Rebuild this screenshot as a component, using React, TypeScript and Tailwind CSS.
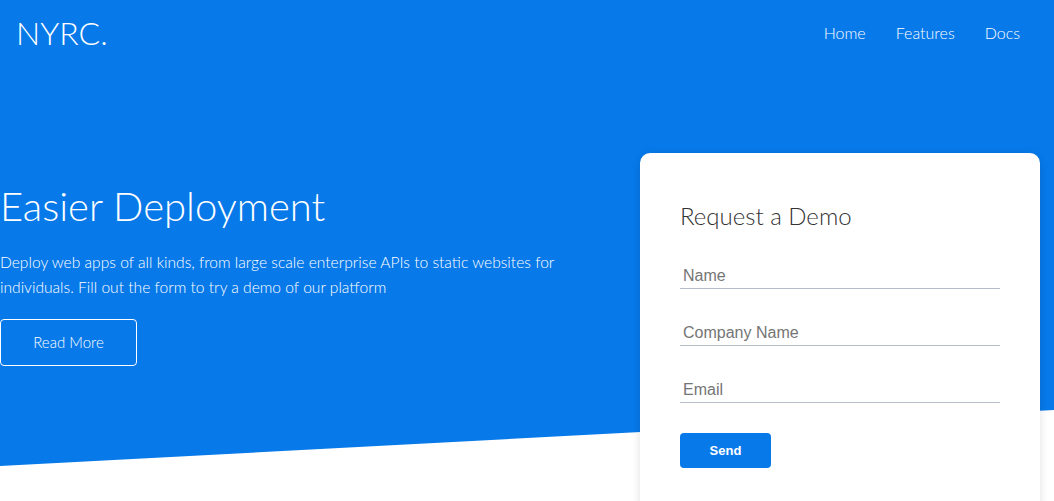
import React from 'react';

const Header = () => {
  const links = ['Home', 'Features', 'Docs'];

  return (
    <header className="flex items-center justify-between pl-4 pr-[34px] pt-[11px]">
      <a className="text-[32px] font-light leading-[44px] text-white" href="#">NYRC.</a>
      <nav className="flex items-center gap-[30px] text-[16px] font-light text-white">
        {links.map((link) => (
          <a key={link} href="#">{link}</a>
        ))}
      </nav>
    </header>
  );
};

const DemoForm = () => {
  const fields = ['Name', 'Company Name', 'Email'];

  return (
    <div className="mt-[6px] h-[360px] w-[400px] shrink-0 rounded-[10px] bg-white px-10 pt-[46px] shadow-[0_2px_10px_rgba(0,0,0,0.12)]">
      <h2 className="text-[24px] font-light leading-[34px] text-[#333]">Request a Demo</h2>
      <form className="mt-[23px] flex w-[320px] flex-col gap-[24px]">
        {fields.map((field) => (
          <input
            key={field}
            placeholder={field}
            className="h-[33px] border-b border-[#b5bdc9] px-[3px] pt-[7px] pb-0 font-['Liberation_Sans',Arial,sans-serif] text-[16px] text-[#333] outline-none placeholder:text-[#757575]"
          />
        ))}
        <button
          type="button"
          className="mt-[6px] h-[35px] w-[91px] rounded-[4px] bg-[#0779e9] font-['Liberation_Sans',Arial,sans-serif] text-[13px] font-bold text-white"
        >
          Send
        </button>
      </form>
    </div>
  );
};

const App = () => {
  return (
    <div className="relative h-[501px] w-full overflow-hidden bg-white font-['Lato','Noto_Sans',sans-serif]">
      {/* slanted blue background */}
      <div className="absolute inset-x-0 top-0 h-[466px] bg-[#0779e9] [clip-path:polygon(0_0,100%_0,100%_88%,0_100%)]"></div>

      <div className="relative">
        <Header />

        <main className="mt-[92px] flex items-start justify-between pr-[14px]">
          <div className="w-[600px] pt-[35px] text-white">
            <h1 className="text-[40px] font-light leading-[48px]">Easier Deployment</h1>
            <p className="mt-[20px] text-[15.6px] font-light leading-[25px]">
              Deploy web apps of all kinds, from large scale enterprise APIs to static websites for individuals. Fill out the form to try a demo of our platform
            </p>
            <button className="mt-[19px] h-[47px] w-[137px] rounded-[4px] border border-white text-[15px] font-light text-white">
              Read More
            </button>
          </div>

          <DemoForm />
        </main>
      </div>
    </div>
  );
};

export default App;
